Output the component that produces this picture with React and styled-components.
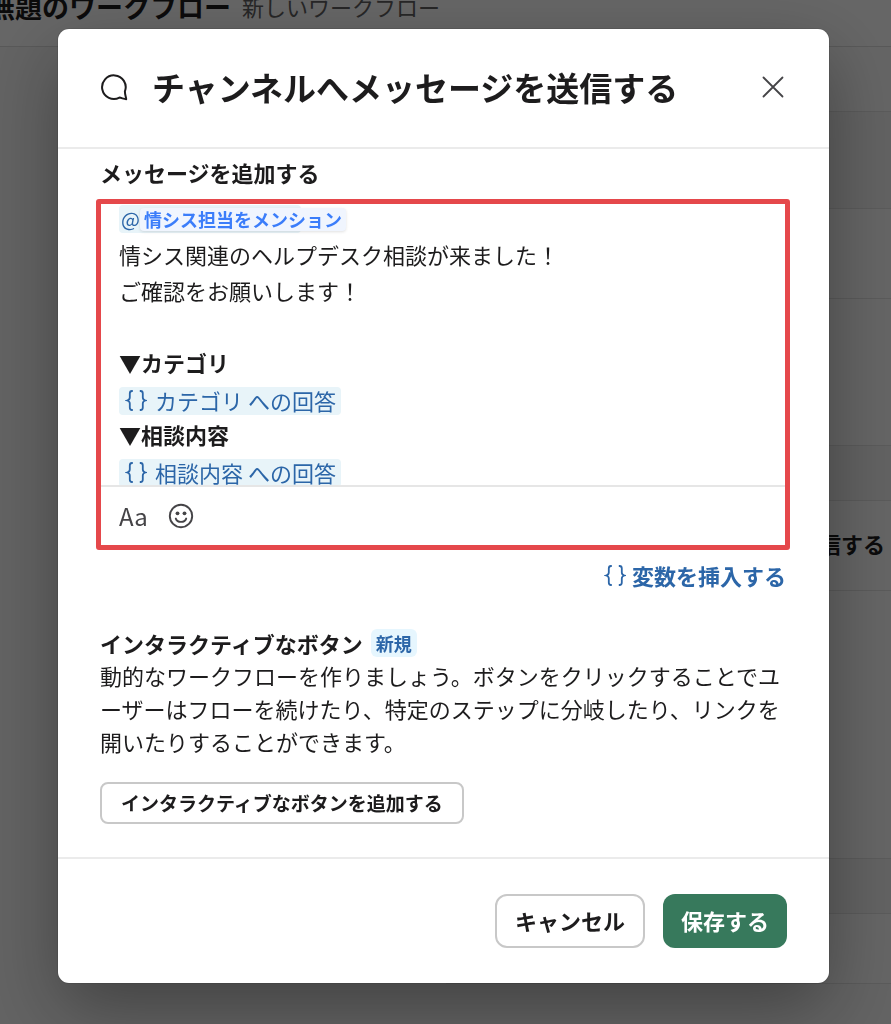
import React from "react";
import styled, { createGlobalStyle } from "styled-components";

const steps = [
  { height: 65 },
  { height: 97, muted: true },
  { height: 90 },
  { height: 147 },
  { height: 55, muted: true },
  { height: 90, title: "チャンネルへメッセージを送信する" },
  { height: 268 },
  { height: 55, muted: true },
  { height: 70 },
];

const MessageIcon = () => (
  <svg width="28" height="28" viewBox="0 0 28 28" fill="none" aria-hidden="true">
    <path
      d="M24.9 18.4A11.8 11.8 0 1 0 19.4 24.6C21.4 24.8 23.8 26 26.2 26.2C26 24 24.8 21 24.9 18.4Z"
      stroke="#1d1c1d"
      strokeWidth="2"
      strokeLinejoin="round"
    />
  </svg>
);

const CloseIcon = () => (
  <svg width="22" height="22" viewBox="0 0 22 22" aria-hidden="true">
    <path d="M1.5 1.5l19 19M20.5 1.5l-19 19" stroke="#454447" strokeWidth="1.8" strokeLinecap="round" />
  </svg>
);

const BracesIcon = () => (
  <svg width="22" height="22" viewBox="0 0 22 22" fill="none" aria-hidden="true">
    <path
      d="M7.8 2H7Q4.8 2 4.8 4.5V8.5Q4.8 10.7 2.2 11.5Q4.8 12.3 4.8 14.5V18.5Q4.8 21 7 21H7.8M14.8 2H15.6Q17.8 2 17.8 4.5V8.5Q17.8 10.7 20.4 11.5Q17.8 12.3 17.8 14.5V18.5Q17.8 21 15.6 21H14.8"
      stroke="currentColor"
      strokeWidth="1.8"
    />
  </svg>
);

const EmojiIcon = () => (
  <svg width="26" height="26" viewBox="0 0 26 26" fill="none" aria-hidden="true">
    <circle cx="13" cy="13" r="11.2" stroke="#454447" strokeWidth="1.9" />
    <circle cx="9.5" cy="10.3" r="1.9" fill="#454447" />
    <circle cx="16.5" cy="10.3" r="1.9" fill="#454447" />
    <path d="M7.8 15.6C9.4 20 16.6 20 18.2 15.6" stroke="#454447" strokeWidth="1.9" strokeLinecap="round" />
  </svg>
);

const Variable = ({ name }) => (
  <VariableChip contentEditable={false}>
    <BracesIcon />
    {name} への回答
  </VariableChip>
);

const App = () => {
  return (
    <Page lang="ja">
      <GlobalStyle />
      <PageHeader>
        <PageTitle>無題のワークフロー</PageTitle>
        <PageSubtitle>新しいワークフロー</PageSubtitle>
      </PageHeader>
      <StepList>
        {steps.map((step, index) => (
          <Step key={index} $height={step.height} $muted={step.muted}>
            {step.title}
          </Step>
        ))}
      </StepList>
      <Overlay>
        <Dialog role="dialog" aria-modal="true" aria-labelledby="dialog-title">
          <DialogHeader>
            <MessageIcon />
            <DialogTitle id="dialog-title">チャンネルへメッセージを送信する</DialogTitle>
            <IconButton aria-label="閉じる">
              <CloseIcon />
            </IconButton>
          </DialogHeader>
          <DialogBody>
            <Heading id="message-label">メッセージを追加する</Heading>
            <Editor>
              <Message
                role="textbox"
                aria-multiline="true"
                aria-labelledby="message-label"
                contentEditable
                suppressContentEditableWarning
              >
                <MentionLine>
                  <MentionChip contentEditable={false}>
                    @<MentionLabel>情シス担当をメンション</MentionLabel>
                  </MentionChip>
                </MentionLine>
                <Line>情シス関連のヘルプデスク相談が来ました！</Line>
                <Line>ご確認をお願いします！</Line>
                <Line>
                  <br />
                </Line>
                <Line $bold>▼カテゴリ</Line>
                <Line>
                  <Variable name="カテゴリ" />
                </Line>
                <Line $bold>▼相談内容</Line>
                <Line>
                  <Variable name="相談内容" />
                </Line>
              </Message>
              <Toolbar>
                <IconButton aria-label="書式設定">Aa</IconButton>
                <IconButton aria-label="絵文字">
                  <EmojiIcon />
                </IconButton>
              </Toolbar>
            </Editor>
            <InsertButton>
              <BracesIcon />
              変数を挿入する
            </InsertButton>
            <HeadingRow>
              <Heading>インタラクティブなボタン</Heading>
              <Badge>新規</Badge>
            </HeadingRow>
            <Description>
              動的なワークフローを作りましょう。ボタンをクリックすることでユーザーはフローを続けたり、特定のステップに分岐したり、リンクを開いたりすることができます。
            </Description>
            <Button $small>インタラクティブなボタンを追加する</Button>
          </DialogBody>
          <DialogFooter>
            <Button>キャンセル</Button>
            <Button $primary>保存する</Button>
          </DialogFooter>
        </Dialog>
      </Overlay>
    </Page>
  );
};

export default App;

const GlobalStyle = createGlobalStyle`
  * {
    box-sizing: border-box;
  }
  body {
    margin: 0;
    overflow: hidden;
    color: #1d1c1d;
    font-family: "Noto Sans CJK JP", sans-serif;
    font-size: 22px;
    line-height: 32px;
  }
  h1, h2, h3, p {
    margin: 0;
  }
  button {
    font-family: inherit;
    color: inherit;
    cursor: pointer;
  }
  svg {
    display: block;
    flex-shrink: 0;
  }
`;

const Page = styled.div`
  min-height: 100vh;
  background: #f8f8f8;
  overflow: hidden;
`;

const PageHeader = styled.header`
  display: flex;
  gap: 11px;
  height: 47px;
  margin-left: -12px;
  line-height: 12px;
  white-space: nowrap;
  background: #fff;
  border-bottom: 1px solid #ddd;
`;

const PageTitle = styled.h1`
  font-size: 27px;
  font-weight: 700;
  line-height: 14px;
`;

const PageSubtitle = styled.span`
  color: #616061;
`;

const StepList = styled.div`
  width: 50%;
  margin-left: auto;
`;

const Step = styled.div`
  display: flex;
  align-items: center;
  justify-content: flex-end;
  height: ${({ $height }) => $height}px;
  padding: 0 6px 6px 0;
  font-weight: 700;
  background: ${({ $muted }) => ($muted ? "#f4f4f4" : "#fbfbfb")};
  border-bottom: 1px solid #e2e2e2;
`;

const Overlay = styled.div`
  position: fixed;
  inset: 0;
  padding: 29px 62px 41px 58px;
  background: rgba(0, 0, 0, 0.6);
  overflow: auto;
`;

const Dialog = styled.section`
  background: #fff;
  border-radius: 11px;
  box-shadow: 0 0 0 1px rgba(29, 28, 29, 0.13), 0 26px 72px rgba(0, 0, 0, 0.35);
`;

const DialogHeader = styled.header`
  display: flex;
  align-items: center;
  height: 120px;
  padding: 0 45px 2px 42px;
  border-bottom: 2px solid #ebebeb;
`;

const DialogTitle = styled.h2`
  flex: 1;
  margin-left: 24px;
  font-size: 33px;
  font-weight: 700;
  line-height: 48px;
`;

const IconButton = styled.button`
  display: flex;
  padding: 0;
  border: 0;
  background: none;
  color: #454447;
  font-size: 24px;
  line-height: 32px;
`;

const DialogBody = styled.div`
  display: flex;
  flex-direction: column;
  align-items: flex-start;
  padding: 7px 43px 33px 42px;
`;

const Heading = styled.h3`
  font-size: 22px;
  font-weight: 700;
`;

const Editor = styled.div`
  align-self: stretch;
  margin: 11px -4px 9px;
  border: 5px solid #e5484b;
  border-radius: 3px;
`;

const Message = styled.div`
  height: 281px;
  padding: 0 18px;
  overflow: hidden;
  line-height: 36px;
  outline: none;
`;

const Line = styled.div`
  display: flex;
  align-items: center;
  height: 36px;
  font-weight: ${({ $bold }) => ($bold ? 700 : 400)};
`;

const MentionLine = styled.div`
  display: flex;
  align-items: flex-start;
  height: 32px;
  padding-top: 1px;
`;

const MentionChip = styled.span`
  display: flex;
  align-items: center;
  width: 182px;
  height: 28px;
  padding-left: 2px;
  border-radius: 4px;
  background: #e8f4f9;
  color: #2c66a8;
  font-size: 20px;
`;

const MentionLabel = styled.span`
  flex-shrink: 0;
  padding: 0 4px;
  border-radius: 4px;
  background: #f0f5fe;
  box-shadow: 0 1px 3px rgba(0, 0, 0, 0.12);
  color: #3b7dfa;
  font-size: 18px;
  font-weight: 700;
  line-height: 23px;
  white-space: nowrap;
`;

const VariableChip = styled.span`
  display: flex;
  align-items: center;
  height: 28px;
  margin-top: 6px;
  padding: 0 5px 2px 4px;
  border-radius: 4px;
  background: #e8f4f9;
  color: #2c66a8;
  white-space: pre;

  svg {
    margin: 0 8px 0 2px;
  }
`;

const Toolbar = styled.div`
  display: flex;
  align-items: center;
  gap: 20px;
  height: 60px;
  padding: 0 18px;
  border-top: 2px solid #e6e6e6;
`;

const InsertButton = styled.button`
  display: flex;
  align-items: center;
  align-self: flex-end;
  gap: 6px;
  margin-bottom: 36px;
  padding: 0;
  border: 0;
  background: none;
  color: #2c66a8;
  font-size: 22px;
  font-weight: 700;
  line-height: 32px;
`;

const HeadingRow = styled.div`
  display: flex;
  align-items: center;
  gap: 8px;
`;

const Badge = styled.span`
  padding: 0 5px;
  border-radius: 6px;
  background: #e6f6fe;
  color: #2c66a8;
  font-size: 18px;
  font-weight: 700;
  line-height: 28px;
`;

const Description = styled.p`
  margin-bottom: 24px;
  line-height: 33px;
`;

const Button = styled.button`
  height: ${({ $small }) => ($small ? 42 : 54)}px;
  padding: 0 ${({ $small }) => ($small ? 19 : 18)}px 2px;
  border: ${({ $primary }) => ($primary ? "0" : "2px solid #c8c8c8")};
  border-radius: ${({ $small }) => ($small ? 8 : 12)}px;
  background: ${({ $primary }) => ($primary ? "#37795c" : "#fff")};
  font-size: ${({ $small }) => ($small ? 19 : 22)}px;
  font-weight: 700;

  && {
    color: ${({ $primary }) => ($primary ? "#fff" : "#1d1c1d")};
  }
`;

const DialogFooter = styled.footer`
  display: flex;
  justify-content: flex-end;
  gap: 18px;
  padding: 35px 42px;
  border-top: 2px solid #ebebeb;
`;
